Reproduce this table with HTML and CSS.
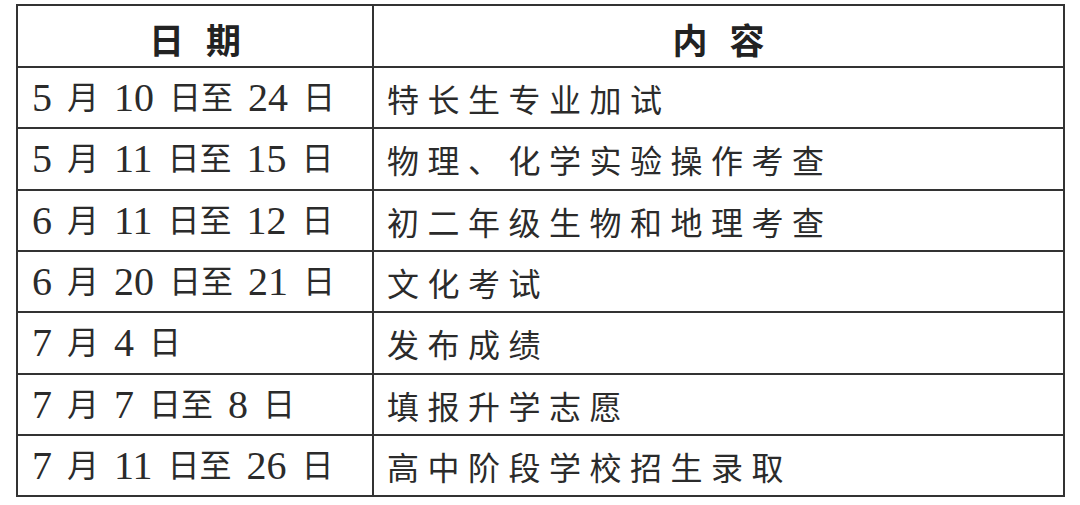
FILE: index.html
```html
<!DOCTYPE html>
<html lang="zh-CN">
<head>
<meta charset="utf-8">
<title>日程安排</title>
<link rel="stylesheet" href="styles.css">
</head>
<body>
<div class="page">
  <table class="schedule">
    <colgroup><col class="col-date"><col class="col-item"></colgroup>
    <thead>
      <tr class="row-head"><th><span class="head-text">日期</span></th><th><span class="head-text">内容</span></th></tr>
    </thead>
    <tbody>
      <tr class="row-a"><td class="date"><span class="n">5</span> 月 <span class="n">10</span> 日至 <span class="n">24</span> 日</td><td class="item">特长生专业加试</td></tr>
      <tr class="row-b"><td class="date"><span class="n">5</span> 月 <span class="n">11</span> 日至 <span class="n">15</span> 日</td><td class="item">物理、化学实验操作考查</td></tr>
      <tr class="row-a"><td class="date"><span class="n">6</span> 月 <span class="n">11</span> 日至 <span class="n">12</span> 日</td><td class="item">初二年级生物和地理考查</td></tr>
      <tr class="row-a"><td class="date"><span class="n">6</span> 月 <span class="n">20</span> 日至 <span class="n">21</span> 日</td><td class="item">文化考试</td></tr>
      <tr class="row-b"><td class="date"><span class="n">7</span> 月 <span class="n">4</span> 日</td><td class="item">发布成绩</td></tr>
      <tr class="row-a"><td class="date"><span class="n">7</span> 月 <span class="n">7</span> 日至 <span class="n">8</span> 日</td><td class="item">填报升学志愿</td></tr>
      <tr class="row-a"><td class="date"><span class="n">7</span> 月 <span class="n">11</span> 日至 <span class="n">26</span> 日</td><td class="item">高中阶段学校招生录取</td></tr>
    </tbody>
  </table>
</div>
</body>
</html>
```

FILE: styles.css
```css
html, body {
  margin: 0;
  padding: 0;
  background: #ffffff;
}

.page {
  padding: 4px 0 0 16px;
}

.schedule {
  width: 1049px;
  border-collapse: collapse;
  table-layout: fixed;
  border: 2px solid #333333;
  color: #2b2b2b;
}

.col-date {
  width: 356px;
}

.schedule th,
.schedule td {
  border: 2px solid #333333;
  padding: 0;
  vertical-align: middle;
  line-height: 1;
  white-space: nowrap;
}

.row-head { height: 62px; }
.row-a { height: 61px; }
.row-b { height: 62px; }

.schedule th {
  font-family: "Noto Sans CJK SC", sans-serif;
  font-size: 35px;
  font-weight: 700;
  text-align: center;
  color: #222222;
}

.head-text {
  letter-spacing: 22px;
  margin-right: -22px;
  position: relative;
  top: 2px;
}

.date {
  font-family: "Liberation Serif", "Noto Sans CJK SC", serif;
  font-size: 32px;
  word-spacing: 7px;
  padding-left: 14px !important;
}

.date .n {
  font-size: 40px;
  vertical-align: -2px;
}

.item {
  font-family: "Noto Sans CJK SC", sans-serif;
  font-size: 32px;
  letter-spacing: 8.5px;
  padding-left: 13px !important;
}
```
